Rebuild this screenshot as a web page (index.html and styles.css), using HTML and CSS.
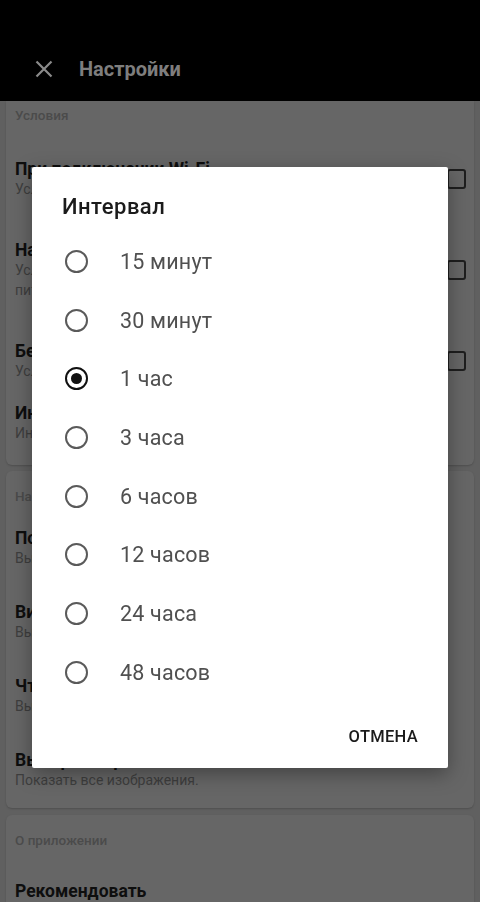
FILE: index.html
```html
<!DOCTYPE html>
<html lang="ru">
<head>
<meta charset="utf-8">
<title>Настройки</title>
<link rel="stylesheet" href="styles.css">
</head>
<body>
<header class="appbar">
  <svg class="close" width="18" height="18" viewBox="0 0 18 18"><path d="M1.5 1.5 L16.5 16.5 M16.5 1.5 L1.5 16.5" stroke="#8a8a8a" stroke-width="2.2" fill="none"/></svg>
  <span class="appbar-title">Настройки</span>
</header>
<main class="content">
  <section class="card card-first">
    <div class="card-header">Условия</div>
    <div class="row row-check">
      <div class="row-text">
        <div class="row-title">При подключении Wi-Fi</div>
        <div class="row-sub">Условие: только при подключении к Wi-Fi</div>
      </div>
      <span class="checkbox"></span>
    </div>
    <div class="row row-check">
      <div class="row-text">
        <div class="row-title">На зарядке</div>
        <div class="row-sub">Условие: обновлять только во время зарядки от<br>питания</div>
      </div>
      <span class="checkbox"></span>
    </div>
    <div class="row row-check">
      <div class="row-text">
        <div class="row-title">Без роуминга</div>
        <div class="row-sub">Условие: не обновлять в роуминге</div>
      </div>
      <span class="checkbox"></span>
    </div>
    <div class="row row-tight">
      <div class="row-text">
        <div class="row-title">Интервал</div>
        <div class="row-sub">Интервал обновления: 1 час</div>
      </div>
    </div>
  </section>
  <section class="card">
    <div class="card-header">Настройки отображения</div>
    <div class="row">
      <div class="row-text">
        <div class="row-title">Показывать уведомления</div>
        <div class="row-sub">Выводить уведомления о новых записях</div>
      </div>
    </div>
    <div class="row">
      <div class="row-text">
        <div class="row-title">Вид списка</div>
        <div class="row-sub">Выберите вид списка</div>
      </div>
    </div>
    <div class="row">
      <div class="row-text">
        <div class="row-title">Чтение</div>
        <div class="row-sub">Выберите режим чтения</div>
      </div>
    </div>
    <div class="row">
      <div class="row-text">
        <div class="row-title">Выбор изображений</div>
        <div class="row-sub">Показать все изображения.</div>
      </div>
    </div>
  </section>
  <section class="card">
    <div class="card-header">О приложении</div>
    <div class="row row-single">
      <div class="row-text">
        <div class="row-title">Рекомендовать</div>
      </div>
    </div>
  </section>
</main>

<div class="dialog" role="dialog">
  <div class="dialog-title">Интервал</div>
  <ul class="options">
    <li class="option"><span class="radio"></span><span class="option-label">15 минут</span></li>
    <li class="option"><span class="radio"></span><span class="option-label">30 минут</span></li>
    <li class="option"><span class="radio radio-on"></span><span class="option-label">1 час</span></li>
    <li class="option"><span class="radio"></span><span class="option-label">3 часа</span></li>
    <li class="option"><span class="radio"></span><span class="option-label">6 часов</span></li>
    <li class="option"><span class="radio"></span><span class="option-label">12 часов</span></li>
    <li class="option"><span class="radio"></span><span class="option-label">24 часа</span></li>
    <li class="option"><span class="radio"></span><span class="option-label">48 часов</span></li>
  </ul>
  <div class="dialog-actions">
    <span class="btn">ОТМЕНА</span>
  </div>
</div>
</body>
</html>
```

FILE: styles.css
```css
* { box-sizing: border-box; }
html, body { margin: 0; padding: 0; }
body {
  width: 480px;
  height: 902px;
  overflow: hidden;
  background: #606060;
  font-family: Roboto, "Noto Sans", "Liberation Sans", sans-serif;
}

.appbar {
  height: 101px;
  background: #000;
  display: flex;
  align-items: center;
  padding: 36px 0 0 35px;
}
.close { display: block; flex: none; }
.appbar-title {
  margin-left: 26px;
  font-size: 20px;
  font-weight: 700;
  color: #7e7e7e;
}

.content {
  padding: 0 6px;
  display: flex;
  flex-direction: column;
  gap: 6px;
}
.card {
  background: #666666;
  border-radius: 6px;
  box-shadow: 0 1px 2px rgba(0,0,0,0.18);
  padding-top: 16px;
}
.card-first { padding-top: 5px; border-radius: 0 0 6px 6px; padding-bottom: 6px; }
.card:nth-child(3) { margin-top: 1px; }

.card-header {
  padding: 0 9px 7px;
  font-size: 13.5px;
  line-height: 18px;
  font-weight: 500;
  color: #4b4b4b;
}
.card-first .card-header { padding-bottom: 8px; }

.row {
  display: flex;
  align-items: center;
  padding: 16px 8px 18px 9px;
}
.row-check { padding-top: 27px; padding-bottom: 14px; }
.row-tight { padding-top: 8px; padding-bottom: 16px; }
.row-single { padding-top: 25px; }
.row-text { flex: 1; min-width: 0; }
.row-title {
  font-size: 17.5px;
  line-height: 20px;
  font-weight: 700;
  color: #0e0e0e;
  white-space: nowrap;
}
.row-sub {
  font-size: 14px;
  line-height: 20px;
  color: #3e3e3e;
}
.checkbox {
  flex: none;
  width: 19px;
  height: 20px;
  margin-left: 12px;
  border: 2px solid #1e1e1e;
  border-radius: 3px;
}

.dialog {
  position: fixed;
  left: 32px;
  top: 167px;
  width: 416px;
  height: 601px;
  background: #fff;
  border-radius: 2px;
  box-shadow: 0 6px 20px rgba(0,0,0,0.35);
  display: flex;
  flex-direction: column;
}
.dialog-title {
  padding: 27px 30px 0;
  font-size: 22px;
  line-height: 26px;
  font-weight: 500;
  letter-spacing: 0.5px;
  color: #1b1b1b;
}
.options {
  list-style: none;
  margin: 12px 0 0;
  padding: 0;
}
.option {
  height: 58.7px;
  display: flex;
  align-items: center;
  padding-left: 33px;
}
.radio {
  flex: none;
  width: 23px;
  height: 23px;
  border: 2px solid #5a5a5a;
  border-radius: 50%;
  display: flex;
  align-items: center;
  justify-content: center;
}
.radio-on { border-color: #111; }
.radio-on::after {
  content: "";
  width: 11px;
  height: 11px;
  border-radius: 50%;
  background: #111;
}
.option-label {
  margin-left: 32px;
  font-size: 21.5px;
  letter-spacing: 0.2px;
  color: #505050;
}
.dialog-actions {
  margin-top: auto;
  height: 68px;
  display: flex;
  justify-content: flex-end;
  align-items: flex-start;
  padding: 25px 30px 0;
}
.btn {
  font-size: 16.5px;
  line-height: 20px;
  font-weight: 500;
  color: #1b1b1b;
  letter-spacing: 0.3px;
}
```
